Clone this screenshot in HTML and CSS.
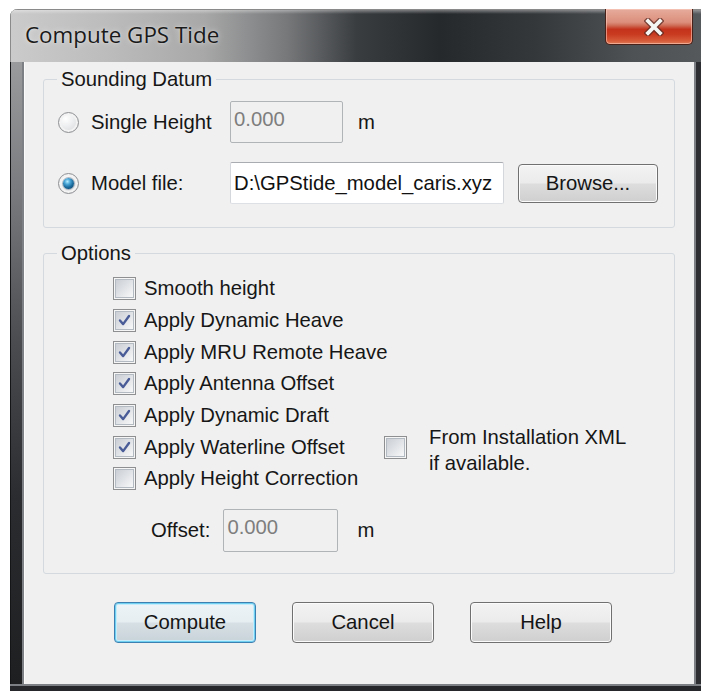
FILE: index.html
```html
<!DOCTYPE html>
<html>
<head>
<meta charset="utf-8">
<title>Compute GPS Tide</title>
<link rel="stylesheet" href="styles.css">
</head>
<body>
<div class="window">
  <div class="titlebar">
    <span class="title">Compute GPS Tide</span>
    <span class="close" aria-label="Close">
      <svg class="close-x" viewBox="0 0 20 18" width="20" height="18">
        <path class="x-shade" d="M4 3 L16 15 M16 3 L4 15"/>
        <path class="x-fill" d="M4 3 L16 15 M16 3 L4 15"/>
      </svg>
    </span>
  </div>
  <div class="frame">
    <div class="edge-left"></div>
    <div class="client">
      <fieldset class="group datum">
        <legend>Sounding Datum</legend>
        <div class="group-body datum-body">
          <div class="datum-row">
            <span class="radio"></span>
            <span class="datum-label">Single Height</span>
            <span class="textbox disabled single">0.000</span>
            <span class="unit">m</span>
          </div>
          <div class="datum-row row-model">
            <span class="radio checked"></span>
            <span class="datum-label">Model file:</span>
            <span class="textbox path">D:\GPStide_model_caris.xyz</span>
            <span class="button browse">Browse...</span>
          </div>
        </div>
      </fieldset>

      <fieldset class="group options">
        <legend>Options</legend>
        <div class="group-body options-body">
          <div class="checks">
            <div class="check-row"><span class="checkbox"></span><span>Smooth height</span></div>
            <div class="check-row"><span class="checkbox"><svg viewBox="0 0 21 21"><path d="M5.5 10.5 L9 14.5 L15.5 5.5"/></svg></span><span>Apply Dynamic Heave</span></div>
            <div class="check-row"><span class="checkbox"><svg viewBox="0 0 21 21"><path d="M5.5 10.5 L9 14.5 L15.5 5.5"/></svg></span><span>Apply MRU Remote Heave</span></div>
            <div class="check-row"><span class="checkbox"><svg viewBox="0 0 21 21"><path d="M5.5 10.5 L9 14.5 L15.5 5.5"/></svg></span><span>Apply Antenna Offset</span></div>
            <div class="check-row"><span class="checkbox"><svg viewBox="0 0 21 21"><path d="M5.5 10.5 L9 14.5 L15.5 5.5"/></svg></span><span>Apply Dynamic Draft</span></div>
            <div class="check-row"><span class="checkbox"><svg viewBox="0 0 21 21"><path d="M5.5 10.5 L9 14.5 L15.5 5.5"/></svg></span><span>Apply Waterline Offset</span></div>
            <div class="check-row"><span class="checkbox"></span><span>Apply Height Correction</span></div>
            <div class="xml-option">
              <span class="checkbox"></span>
              <span class="xml-text">From Installation XML<br>if available.</span>
            </div>
          </div>
          <div class="offset-row">
            <span class="offset-label">Offset:</span>
            <span class="textbox disabled offset">0.000</span>
            <span class="unit offset-unit">m</span>
          </div>
        </div>
      </fieldset>

      <div class="buttons">
        <span class="button default">Compute</span>
        <span class="button">Cancel</span>
        <span class="button">Help</span>
      </div>
    </div>
    <div class="edge-right"></div>
  </div>
  <div class="edge-bottom"></div>
</div>
</body>
</html>
```

FILE: styles.css
```css
* { box-sizing: border-box; }

html, body {
  margin: 0;
  height: 691px;
}

body {
  background: #ffffff;
  overflow: hidden;
  padding: 9px 0 0 10px;
  font-family: "Liberation Sans", Arial, sans-serif;
  font-size: 20.3px;
  color: #161616;
}

/* ---------- window chrome ---------- */
.window {
  width: 693px;
  border-top-left-radius: 8px;
  overflow: hidden;
  background: #2a2c2f;
}

.titlebar {
  display: flex;
  align-items: flex-start;
  height: 53px;
  background:
    linear-gradient(to bottom, rgba(255,255,255,0.45) 0, rgba(255,255,255,0) 5px),
    linear-gradient(to right, #cbcbcb 0, #bcbcbc 14%, #a8a8a8 28%, #76787a 40%, #3a3d40 50%, #26292c 62%, #35383b 76%, #4f5255 90%, #56595c 100%);
  box-shadow: inset 1px 1px 0 #8a8a8a;
}

.title {
  margin: 11px 0 0 15px;
  font-family: "Open Sans", "Liberation Sans", sans-serif;
  font-size: 22.4px;
  line-height: 30px;
  color: #1a1a1a;
  text-shadow: 0 0 6px rgba(255,255,255,0.55), 0 0 2px rgba(255,255,255,0.5);
}

.close {
  margin-left: auto;
  margin-right: 10px;
  width: 88px;
  height: 36px;
  display: flex;
  align-items: center;
  justify-content: center;
  padding-left: 10px;
  border: 1px solid #4a2119;
  border-top: none;
  border-radius: 0 0 5px 5px;
  background: linear-gradient(to bottom, #e6ac9c 0, #dc8e7b 38%, #d0725c 46%, #c4321b 58%, #c93a20 72%, #d65a38 90%, #e07a58 100%);
  box-shadow: inset 0 0 0 1px rgba(255,210,195,0.55);
}

.close-x { display: block; }
.x-shade { stroke: #5a2a22; stroke-width: 6.4; stroke-linecap: square; fill: none; opacity: 0.75; }
.x-fill  { stroke: #f4f6f4; stroke-width: 3.8; stroke-linecap: square; fill: none; }

.frame {
  display: flex;
  height: 622px;
}

.edge-left {
  width: 14px;
  flex: none;
  background: linear-gradient(to bottom, #9a9b9d 0, #7a7c7f 20%, #4a4c4f 45%, #2a2c2f 70%, #1d1f21 100%);
  box-shadow: inset -2px 0 0 #7d8186, inset 1px 0 0 #141516;
}

.edge-right {
  flex: 1;
  background: #2c2e31;
  box-shadow: inset 2px 0 0 #7d8186;
}

.edge-bottom {
  height: 8px;
  background: #25272a;
  box-shadow: inset 0 2px 0 #7d8186;
}

/* ---------- dialog client area ---------- */
.client {
  width: 670px;
  flex: none;
  background: #f0f0f0;
  padding: 6px 19px 0 18px;
  border-left: 1px solid #fbfbfb;
}

.group {
  margin: 0;
  padding: 0;
  border: 1px solid #d3d9de;
  border-radius: 3px;
  min-width: 0;
}

.group legend {
  margin-left: 13px;
  padding: 0 4px;
  line-height: 22px;
  color: #161616;
}

.datum-body {
  padding: 11px 0 23px 14px;
}

.datum-row {
  display: flex;
  align-items: center;
  height: 42px;
}

.row-model { margin-top: 19px; }

.datum-label {
  width: 139px;
  margin-left: 12px;
  white-space: nowrap;
}

.unit { margin-left: 15px; }

/* radio buttons */
.radio {
  width: 21px;
  height: 21px;
  flex: none;
  display: flex;
  align-items: center;
  justify-content: center;
  border-radius: 50%;
  border: 1px solid #8e9093;
  background: radial-gradient(circle at 35% 30%, #ffffff 0, #eeeff0 40%, #d2d4d7 100%);
  box-shadow: inset 0 0 0 2px #f3f3f3;
}

.radio.checked::after {
  content: "";
  width: 11px;
  height: 11px;
  border-radius: 50%;
  background: radial-gradient(circle at 40% 32%, #b6ecff 0, #4aa6d6 28%, #1a6a9c 58%, #0b3b5e 100%);
  box-shadow: 0 0 0 1px rgba(40,70,100,0.35);
}

/* edit boxes */
.textbox {
  display: flex;
  align-items: center;
  height: 42px;
  padding-left: 3px;
  border: 1px solid #abadb3;
  border-color: #a9acb1 #d4d7dc #dde1e6 #d4d7dc;
  border-radius: 2px;
  background: #ffffff;
  white-space: nowrap;
  overflow: hidden;
}

.textbox.disabled {
  background: #f0f0f0;
  border-color: #b1b4b7;
  color: #7e7e7e;
  padding-bottom: 5px;
}

.single { width: 113px; }
.path { width: 274px; color: #111; }
.offset { width: 115px; margin-left: 13px; }

/* push buttons */
.button {
  display: flex;
  align-items: center;
  justify-content: center;
  height: 41px;
  border: 1px solid #707070;
  border-radius: 4px;
  background: linear-gradient(to bottom, #f3f3f3 0, #ebebeb 48%, #dddddd 52%, #cfcfcf 100%);
  box-shadow: inset 0 0 0 1px #fbfbfb;
  color: #151515;
  white-space: nowrap;
}

.browse {
  width: 140px;
  height: 39px;
  margin-left: 14px;
}

.button.default {
  border-color: #3c7fb1;
  box-shadow: inset 0 0 0 1px #6fd0f2, inset 0 0 0 2px #c4ecfa;
  background: linear-gradient(to bottom, #eef4f7 0, #e6eef2 48%, #d6dfe4 52%, #c8d3d9 100%);
}

/* options group */
.options { margin-top: 14px; }

.options-body {
  padding: 9px 0 21px 69px;
}

.checks {
  display: grid;
  grid-template-columns: 271px 1fr;
  grid-auto-rows: 31.67px;
}

.check-row {
  grid-column: 1;
  display: flex;
  align-items: center;
  white-space: nowrap;
}

.check-row .checkbox { margin-right: 8px; }

.checkbox {
  width: 23px;
  height: 23px;
  flex: none;
  padding: 1px;
  border: 1px solid #8e8f90;
  background: linear-gradient(135deg, #c6cbd2 0, #dde0e4 45%, #f2f3f4 80%, #fbfbfb 100%);
  box-shadow: inset 0 0 0 1px #f6f6f6, inset 0 0 0 2px #b4bac1;
}

.checkbox svg {
  display: block;
  width: 100%;
  height: 100%;
}

.checkbox path {
  fill: none;
  stroke: #4a5c98;
  stroke-width: 2.6;
  stroke-linecap: round;
  stroke-linejoin: round;
}

.xml-option {
  grid-column: 2;
  grid-row: 6;
  display: flex;
  align-items: flex-start;
}

.xml-option .checkbox { margin-top: 5px; }

.xml-text {
  margin: -7.5px 0 0 22px;
  line-height: 26px;
  white-space: nowrap;
}

.offset-row {
  display: flex;
  align-items: center;
  height: 43px;
  margin: 14px 0 0 38px;
}

.offset-row .offset { height: 43px; }
.offset-unit { margin-left: 19px; }

.buttons {
  display: flex;
  gap: 36px;
  margin: 28px 0 0 71px;
}

.buttons .button { width: 142px; }
```
